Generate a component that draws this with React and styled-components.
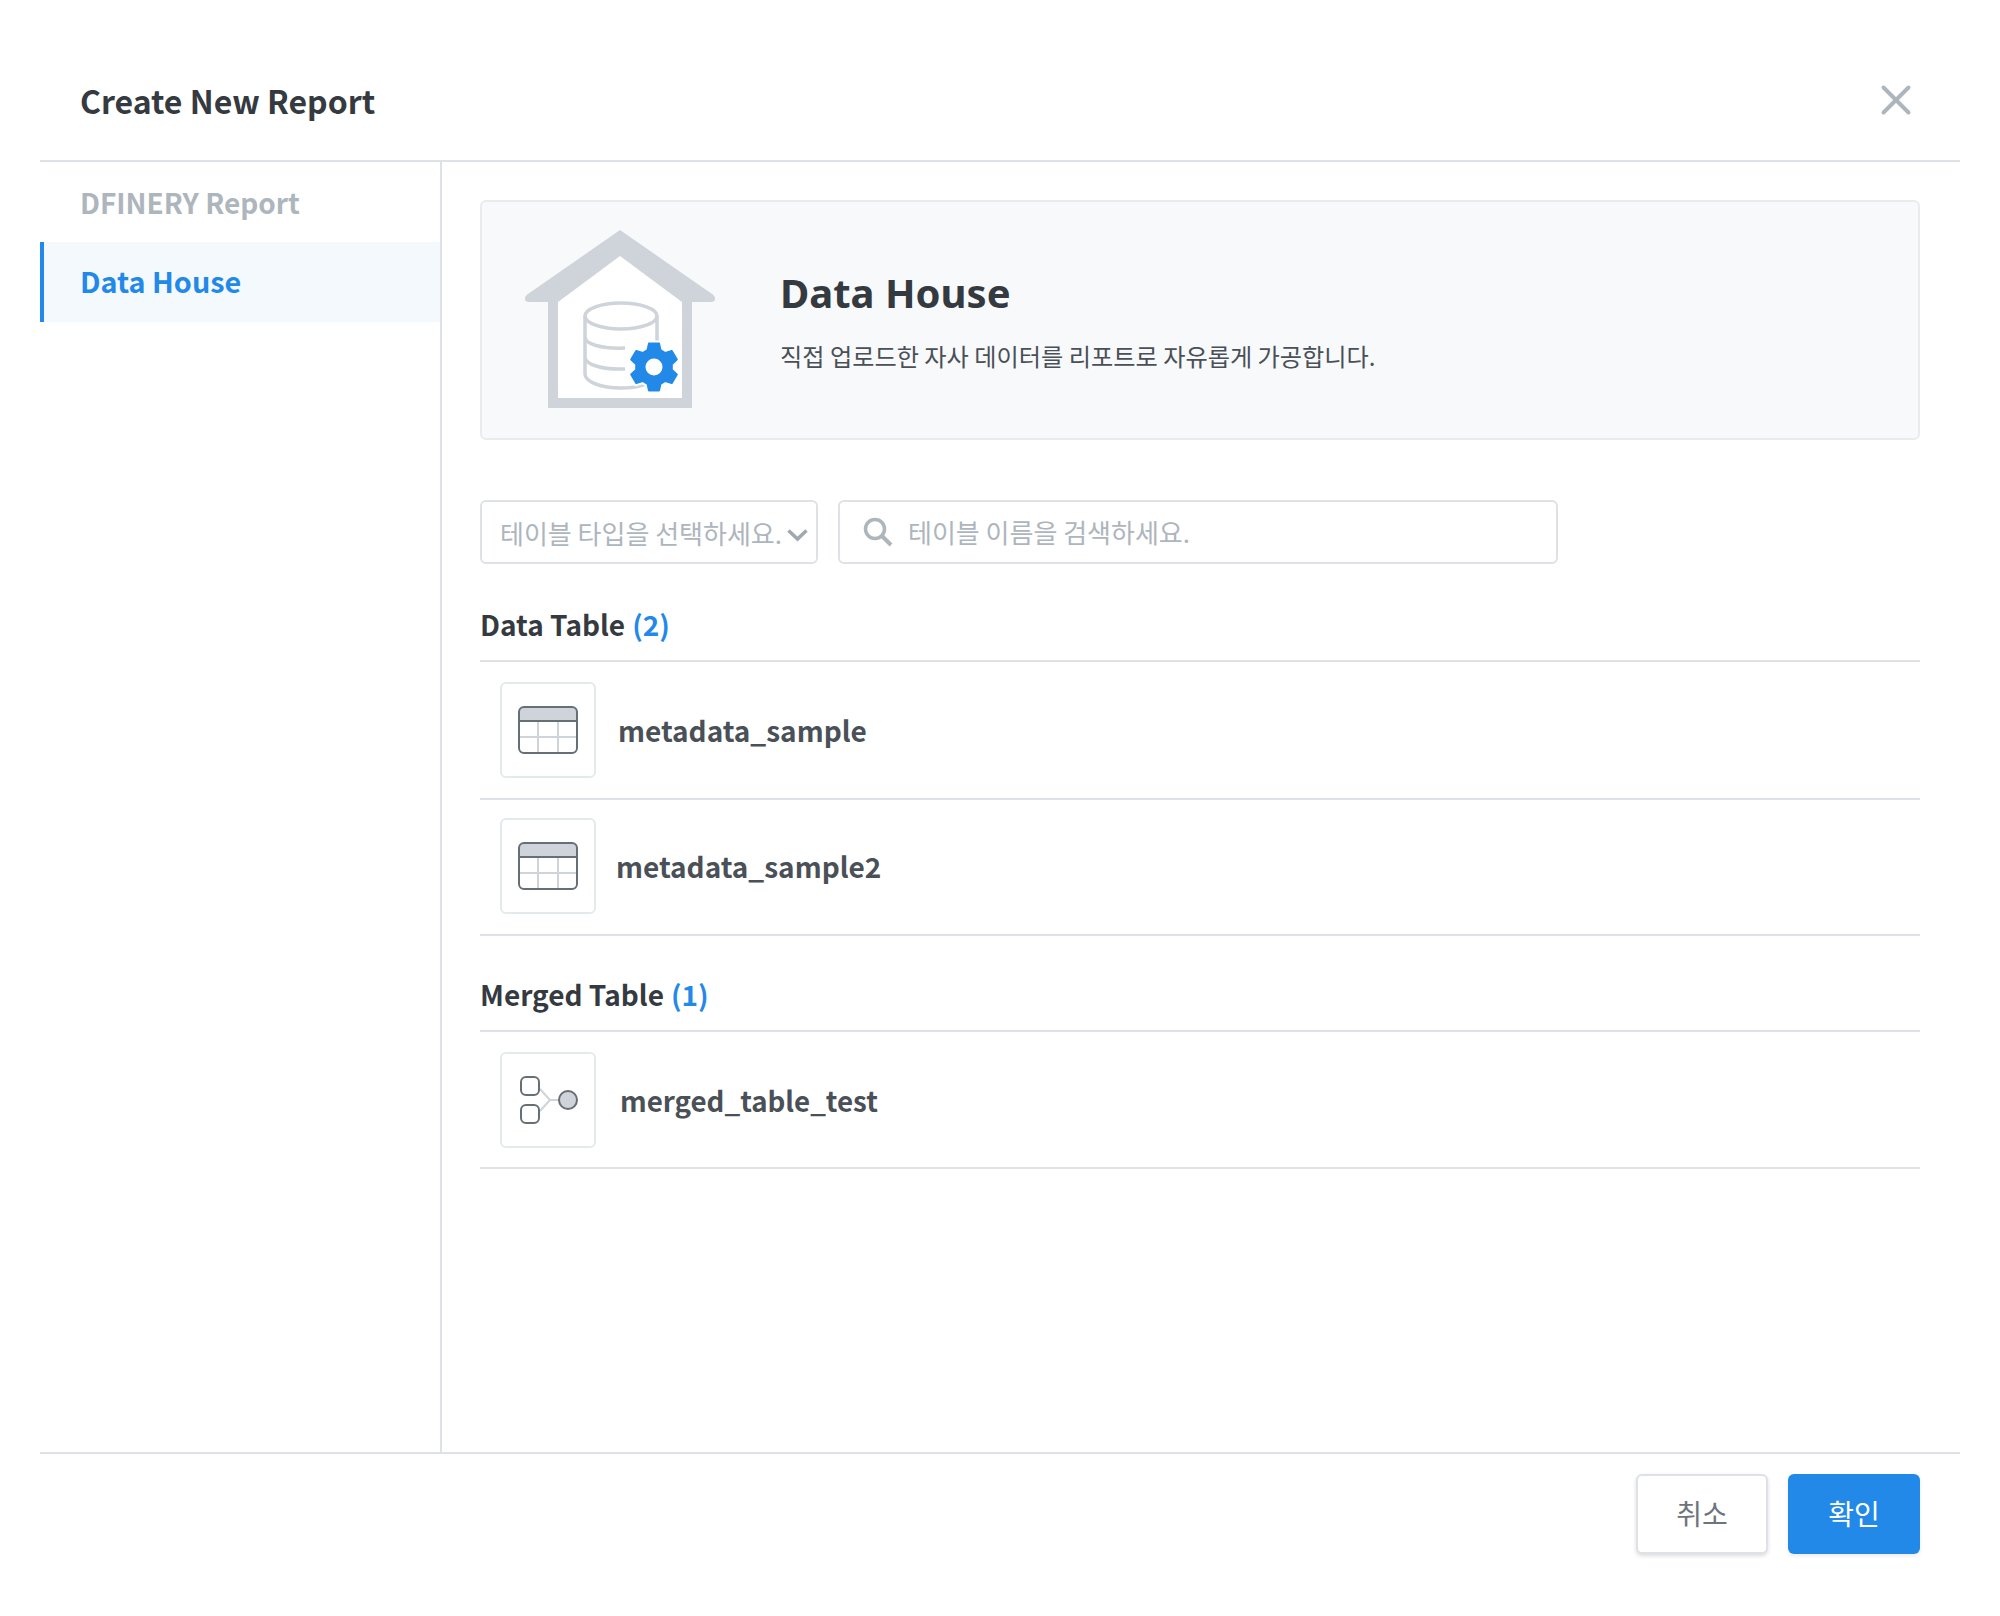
import styled, { createGlobalStyle } from "styled-components";
import { X } from "lucide-react";

const GlobalStyle = createGlobalStyle`
  html, body { margin: 0; background: #fff; }
  * { box-sizing: border-box; }
  body { font-family: "Noto Sans CJK KR", "Noto Sans", sans-serif; color: #343a40; }
`;

const Modal = styled.div`
  width: 2000px;
  height: 1616px;
  padding: 40px 40px 0;
  display: flex;
  flex-direction: column;
`;

const Header = styled.header`
  height: 122px;
  border-bottom: 2px solid #dee2e6;
  padding: 0 40px;
  display: flex;
  align-items: center;
  justify-content: space-between;
`;

const Title = styled.h1`
  margin: 0;
  font-size: 32px;
  font-weight: 700;
  color: #343a40;
`;

const Close = styled.button`
  border: none;
  background: none;
  padding: 0;
  margin-right: -1px;
  color: #adb5bd;
  display: flex;
`;

const Body = styled.div`
  height: 1290px;
  display: flex;
`;

const Side = styled.nav`
  width: 402px;
  border-right: 2px solid #dee2e6;
`;

const SideLabel = styled.div`
  height: 80px;
  padding-left: 40px;
  display: flex;
  align-items: center;
  font-size: 28px;
  font-weight: 700;
  color: #adb5bd;
`;

const SideItem = styled.div`
  height: 80px;
  padding: 0 0 3px 36px;
  display: flex;
  align-items: center;
  border-left: 4px solid #2389e8;
  background: #f4f9fe;
  font-size: 28.8px;
  font-weight: 700;
  color: #2389e8;
`;

const Main = styled.main`
  flex: 1;
  padding: 38px 40px 0 38px;
`;

const Hero = styled.section`
  height: 240px;
  border: 2px solid #e9ecef;
  border-radius: 6px;
  background: #f8f9fa;
  display: flex;
  align-items: center;
  padding: 0 0 2px 43px;
  gap: 65px;
`;

const HeroTitle = styled.h2`
  margin: 0 0 18px;
  font-family: "Noto Sans", sans-serif;
  font-size: 40px;
  line-height: 54px;
  font-weight: 700;
  color: #343a40;
`;

const HeroText = styled.p`
  margin: 0;
  font-size: 24.2px;
  color: #495057;
`;

const Filters = styled.div`
  margin-top: 60px;
  display: flex;
  gap: 20px;
`;

const Select = styled.div`
  width: 338px;
  height: 64px;
  border: 2px solid #dee2e6;
  border-radius: 6px;
  padding: 0 8px 0 18px;
  display: flex;
  align-items: center;
  justify-content: space-between;
  color: #adb5bd;
  font-size: 26px;
  white-space: nowrap;
`;

const SearchBox = styled.div`
  width: 720px;
  height: 64px;
  border: 2px solid #dee2e6;
  border-radius: 6px;
  padding: 0 23px;
  display: flex;
  align-items: center;
  gap: 15px;
  color: #adb5bd;
  font-size: 26px;
`;

const SearchText = styled.span`
  padding-bottom: 2px;
`;

const GroupTitle = styled.h3`
  margin: 0;
  height: 70px;
  padding-bottom: 4px;
  display: flex;
  align-items: center;
  gap: 7px;
  border-bottom: 2px solid #dee2e6;
  font-size: 28px;
  font-weight: 700;
  color: #343a40;
  span { color: #2389e8; }
`;

const Group = styled.section`
  margin-top: ${(p) => p.$top}px;
`;

const Row = styled.div`
  height: ${(p) => p.$height}px;
  border-bottom: 2px solid #dee2e6;
  padding: 0 0 ${(p) => p.$lift || 0}px 20px;
  display: flex;
  align-items: center;
  gap: ${(p) => p.$gap}px;
  font-size: ${(p) => p.$size || 28}px;
  font-weight: 700;
  color: #495057;
`;

const IconBox = styled.div`
  width: 96px;
  height: 96px;
  border: 2px solid #e3eaec;
  border-radius: 6px;
  display: flex;
  align-items: center;
  justify-content: center;
`;

const Footer = styled.footer`
  border-top: 2px solid #dee2e6;
  padding: 20px 40px 0;
  display: flex;
  justify-content: flex-end;
  gap: 20px;
`;

const Button = styled.button`
  width: 132px;
  height: 80px;
  padding: 0 0 2px;
  border-radius: 6px;
  border: ${(p) => (p.$primary ? "none" : "2px solid #dee2e6")};
  background: ${(p) => (p.$primary ? "#2389e8" : "#fff")};
  color: ${(p) => (p.$primary ? "#fff" : "#6c757d")};
  box-shadow: 0 2px 4px rgba(0, 0, 0, ${(p) => (p.$primary ? 0.08 : 0.14)});
  font-family: inherit;
  font-size: 28px;
`;

// six flat teeth round a centre, in the house picture's coordinates
const gearPoints = (cx, cy) => {
  const points = [];
  for (let i = 0; i < 6; i++) {
    const a = -90 + i * 60;
    [[18, -21], [24, -12], [24, 12], [18, 21]].forEach(([r, d]) => {
      const t = ((a + d) * Math.PI) / 180;
      points.push(`${(cx + r * Math.cos(t)).toFixed(1)},${(cy + r * Math.sin(t)).toFixed(1)}`);
    });
  }
  return points.join(" ");
};

const HouseArt = () => (
  <svg width="190" height="178" viewBox="0 0 190 178">
    <path d="M95 0 L187 64 Q191 67 190 70 Q189 72 186 72 L167 72 V178 H23 V72 H4 Q1 72 0 70 Q-1 67 3 64 Z" fill="#ced4da" />
    <path d="M95 26 L33 72 V168 H157 V72 Z" fill="#fff" />
    <g fill="none" stroke="#ced4da" strokeWidth="3.5">
      <ellipse cx="96" cy="86" rx="36" ry="13" />
      <path d="M60 86 V144 C60 152 76 158 96 158 C110 158 122 155 128 150 M132 86 V120 M60 107 C60 114 76 119 100 118 M60 127 C60 134 76 140 100 139" />
    </g>
    <polygon points={gearPoints(129, 137)} fill="#2389e8" stroke="#fff" strokeWidth="6" strokeLinejoin="round" />
    <polygon points={gearPoints(129, 137)} fill="#2389e8" stroke="#2389e8" strokeWidth="2" strokeLinejoin="round" />
    <circle cx="129" cy="137" r="8.5" fill="#fff" />
  </svg>
);

const SelectArrow = () => (
  <svg width="21" height="19" viewBox="0 0 21 19">
    <path d="M1.5 7.5 L10.5 16 L19.5 7.5" fill="none" stroke="#a0a8b0" strokeWidth="3.5" />
  </svg>
);

const SearchIcon = () => (
  <svg width="30" height="30" viewBox="0 0 30 30">
    <circle cx="12" cy="12" r="9.5" fill="none" stroke="#adb5bd" strokeWidth="3.5" />
    <path d="M18.5 18.5 L28 28" stroke="#adb5bd" strokeWidth="4" />
  </svg>
);

const TableIcon = () => (
  <svg width="60" height="48" viewBox="0 0 60 48">
    <path d="M1 6 a5 5 0 0 1 5 -5 H54 a5 5 0 0 1 5 5 V15 H1 Z" fill="#ced4da" />
    <path d="M20 15 V47 M40 15 V47 M1 31 H59" stroke="#ced4da" strokeWidth="2" />
    <rect x="1" y="1" width="58" height="46" rx="5" fill="none" stroke="#666e76" strokeWidth="2" />
    <path d="M1 15 H59" stroke="#666e76" strokeWidth="2" />
  </svg>
);

const MergeIcon = () => (
  <svg width="60" height="48" viewBox="-2 0 60 48">
    <path d="M20 13 L30 24 L20 35 M30 24 H39" fill="none" stroke="#ced4da" strokeWidth="2" />
    <rect x="1" y="1" width="18" height="18" rx="5" fill="none" stroke="#666e76" strokeWidth="2" />
    <rect x="1" y="29" width="18" height="18" rx="5" fill="none" stroke="#666e76" strokeWidth="2" />
    <circle cx="48" cy="24" r="9" fill="#ced4da" stroke="#666e76" strokeWidth="2" />
  </svg>
);

export default function App() {
  return (
    <>
      <GlobalStyle />
      <Modal>
        <Header>
          <Title>Create New Report</Title>
          <Close>
            <X size={50} strokeWidth={1.9} />
          </Close>
        </Header>
        <Body>
          <Side>
            <SideLabel>DFINERY Report</SideLabel>
            <SideItem>Data House</SideItem>
          </Side>
          <Main>
            <Hero>
              <HouseArt />
              <div>
                <HeroTitle>Data House</HeroTitle>
                <HeroText>직접 업로드한 자사 데이터를 리포트로 자유롭게 가공합니다.</HeroText>
              </div>
            </Hero>
            <Filters>
              <Select>
                테이블 타입을 선택하세요.
                <SelectArrow />
              </Select>
              <SearchBox>
                <SearchIcon />
                <SearchText>테이블 이름을 검색하세요.</SearchText>
              </SearchBox>
            </Filters>
            <Group $top={28}>
              <GroupTitle>Data Table <span>(2)</span></GroupTitle>
              <Row $height={138} $gap={22}><IconBox><TableIcon /></IconBox>metadata_sample</Row>
              <Row $height={136} $gap={20} $lift={2}><IconBox><TableIcon /></IconBox>metadata_sample2</Row>
            </Group>
            <Group $top={26}>
              <GroupTitle>Merged Table <span>(1)</span></GroupTitle>
              <Row $height={137} $gap={24} $size={27.7}><IconBox><MergeIcon /></IconBox>merged_table_test</Row>
            </Group>
          </Main>
        </Body>
        <Footer>
          <Button>취소</Button>
          <Button $primary>확인</Button>
        </Footer>
      </Modal>
    </>
  );
}
